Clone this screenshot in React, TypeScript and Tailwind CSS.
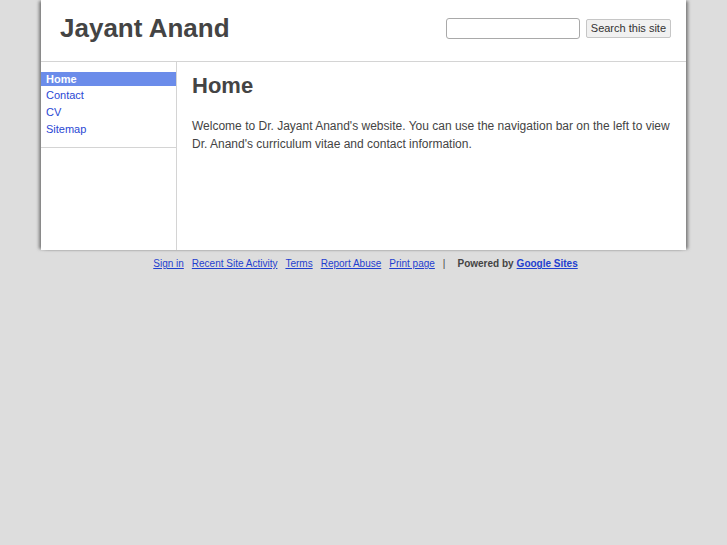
const font = { fontFamily: '"Liberation Sans", Arial, sans-serif' };

const navItems = ['Contact', 'CV', 'Sitemap'];
const footerLinks = ['Sign in', 'Recent Site Activity', 'Terms', 'Report Abuse', 'Print page'];

export default function App() {
  return (
    <div className="min-h-screen bg-[#dddddd]" style={font}>
      <div className="mx-auto w-[645px] bg-white shadow-[-3px_0_3px_-1px_#7a7a7a,3px_0_3px_-1px_#7a7a7a]">
        <header className="flex h-[62px] items-center justify-between border-b border-[#d4d4d4] pb-[5px] pl-[19px] pr-[15px]">
          <h1 className="text-[26px] font-bold leading-none text-[#444444]">Jayant Anand</h1>
          <div className="flex items-center gap-[6px]">
            <input
              type="text"
              className="ml-[1px] h-[21px] w-[134px] rounded-[3px] border border-[#a9a9a9] bg-white"
            />
            <button className="h-[19px] rounded-[2px] border border-[#c6c6c6] bg-[#f1f1f1] px-[4px] text-[11px] leading-none text-[#333333]">
              Search this site
            </button>
          </div>
        </header>

        <div className="flex h-[188px]">
          <aside className="w-[136px] shrink-0 border-r border-[#d4d4d4] pt-[10px]">
            <div className="mb-[1px] flex h-[14px] items-center bg-[#6b8cea] pl-[5px] text-[11px] font-bold text-white">
              Home
            </div>
            {navItems.map((item) => (
              <div key={item} className="flex h-[17px] items-center pl-[5px] text-[11px] text-[#2a48d4]">
                {item}
              </div>
            ))}
            <div className="mt-[9px] border-b border-[#d4d4d4]" />
          </aside>

          <main className="flex-1 pl-[15px] pr-[4px] pt-[11px] text-[#444444]">
            <h2 className="text-[22px] font-bold leading-[26px]">Home</h2>
            <p className="mt-[18px] text-[12px] leading-[18px]">
              Welcome to Dr. Jayant Anand's website. You can use the navigation bar on the left to view
              <br />
              Dr. Anand's curriculum vitae and contact information.
            </p>
          </main>
        </div>
      </div>

      <footer className="flex justify-center pt-[8px] text-[10px] leading-[12px]">
        <div className="ml-[4px] flex items-center">
          {footerLinks.map((link) => (
            <a key={link} href="#" className="mr-[8px] text-[#1f3fcf] underline">
              {link}
            </a>
          ))}
          <span className="text-[#444444]">|</span>
          <span className="ml-[12px] font-bold text-[#444444]">Powered by</span>
          <a href="#" className="ml-[3px] font-bold text-[#1f3fcf] underline">
            Google Sites
          </a>
        </div>
      </footer>
    </div>
  );
}
